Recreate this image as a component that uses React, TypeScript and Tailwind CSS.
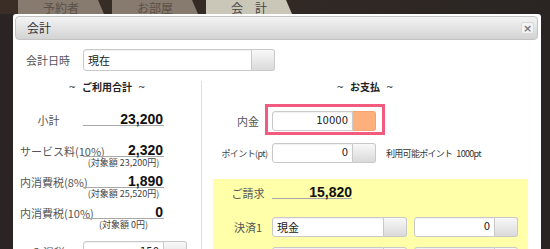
import React from "react";

const NUM = "font-['Liberation_Sans',Arial,sans-serif]";

function Field({
  w,
  text,
  align = "right",
  btn = "gray",
  h = "h-[20px]",
}: {
  w: string;
  text?: string;
  align?: "left" | "right";
  btn?: "gray" | "orange";
  h?: string;
}) {
  return (
    <div className={`flex ${h}`}>
      <div
        className={`${w} h-full bg-white border border-[#c9c9c9] rounded-l-[3px] flex items-center ${
          align === "right" ? "justify-end pr-[4px] font-['DejaVu_Sans',sans-serif] text-[10px]" : "justify-start pl-[4px] text-[11px]"
        } text-[#222] leading-none shadow-[inset_0_1px_1px_rgba(0,0,0,0.06)]`}
      >
        {text}
      </div>
      {btn === "orange" ? (
        <div className="w-[23px] h-full bg-[#fdb07b] border border-[#f5a26c] border-l-0 rounded-r-[3px]" />
      ) : (
        <div className="w-[23px] h-full bg-gradient-to-b from-[#f8f8f8] to-[#dadada] border border-[#c9c9c9] border-l-0 rounded-r-[3px]" />
      )}
    </div>
  );
}

function SumRow({ label, value, sub }: { label: string; value: string; sub?: string }) {
  return (
    <div className="flex h-[31px]">
      <div className="ml-[7px] w-[57px] h-[20px] pt-[7px] text-center whitespace-nowrap text-[11px] leading-[14px] text-[#555]">
        {label}
      </div>
      <div className="ml-[6px] w-[81px] flex flex-col">
        <div
          className={`h-[20px] border-b border-[#a8a8a8] flex items-end justify-end pr-[1px] text-[14px] font-bold leading-[11px] text-[#111] ${NUM}`}
        >
          {value}
        </div>
        <div className="h-[11px] pt-[1px] text-center text-[9px] leading-[10px] text-[#444] whitespace-nowrap">
          {sub}
        </div>
      </div>
    </div>
  );
}

export default function App() {
  return (
    <div className="w-[550px] h-[249px] overflow-hidden bg-[#2a2523] font-['Noto_Sans_CJK_JP',sans-serif]">
      {/* tabs */}
      <div className="flex h-[14px] pl-[18px] gap-[8px] overflow-hidden bg-gradient-to-r from-[#3a2e27] to-[#2a2523]">
        <div className="w-[86px] h-[14px] bg-[#877b6f] [clip-path:polygon(0_0,calc(100%-6px)_0,100%_100%,0_100%)] text-center text-[12px] leading-[12px] pt-[2px] text-[#5a5047]">
          予約者
        </div>
        <div className="w-[86px] h-[14px] bg-[#877b6f] [clip-path:polygon(0_0,calc(100%-6px)_0,100%_100%,0_100%)] text-center text-[12px] leading-[12px] pt-[2px] text-[#5a5047]">
          お部屋
        </div>
        <div className="w-[86px] h-[14px] bg-[#cbc7b8] [clip-path:polygon(0_0,calc(100%-6px)_0,100%_100%,0_100%)] text-center text-[12px] leading-[12px] pt-[2px] text-[#444]">
          会　計
        </div>
      </div>

      {/* dialog */}
      <div className="ml-[13px] w-[528px] h-[260px] bg-white rounded-t-[3px]">
        <div className="pt-[2px] pl-[2px] pr-[3px]">
          <div className="h-[24px] rounded-[4px] border border-[#c3c3c3] bg-gradient-to-b from-[#f4f4f4] to-[#d3d3d3] flex items-center justify-between pl-[11px] pr-[3px]">
            <span className="text-[12px] leading-none text-[#333]">会計</span>
            <div className="w-[13px] h-[12px] bg-[#f3f3f3] border border-[#d8d8d8] rounded-[2px] flex items-center justify-center text-[11px] font-bold leading-none text-[#777] font-['DejaVu_Sans',sans-serif]">
              ×
            </div>
          </div>
        </div>

        {/* date row */}
        <div className="flex items-center mt-[9px]">
          <div className="w-[57px] text-right text-[11px] text-[#555] leading-none">会計日時</div>
          <div className="ml-[13px]">
            <Field w="w-[169px]" text="現在" align="left" h="h-[22px]" />
          </div>
        </div>

        {/* columns */}
        <div className="flex mt-[10px]">
          {/* left column */}
          <div className="w-[189px] h-[170px] border-r border-[#e1e1e1]">
            <div className="h-[12px] flex justify-center items-center gap-[6px] text-[10px] font-bold leading-[12px] text-[#222]">
              <span className="font-['DejaVu_Sans',sans-serif] font-normal text-[9px]">~</span>
              <span>ご利用合計</span>
              <span className="font-['DejaVu_Sans',sans-serif] font-normal text-[9px]">~</span>
            </div>
            <div className="mt-[13px]">
              <SumRow label="小計" value="23,200" />
              <SumRow label="サービス料(10%)" value="2,320" sub="(対象額 23,200円)" />
              <SumRow label="内消費税(8%)" value="1,890" sub="(対象額 25,520円)" />
              <SumRow label="内消費税(10%)" value="0" sub="(対象額 0円)" />
            </div>
            <div className="flex items-center mt-[11px]">
              <div className="ml-[7px] w-[57px] text-center text-[11px] leading-none text-[#555]">入湯税</div>
              <div className="ml-[6px]">
                <Field w="w-[81px]" text="150" h="h-[22px]" />
              </div>
            </div>
          </div>

          {/* right column */}
          <div className="flex-1 pr-[13px]">
            <div className="h-[12px] flex justify-center items-center gap-[6px] text-[10px] font-bold leading-[12px] text-[#222]">
              <span className="font-['DejaVu_Sans',sans-serif] font-normal text-[9px]">~</span>
              <span>お支払</span>
              <span className="font-['DejaVu_Sans',sans-serif] font-normal text-[9px]">~</span>
            </div>

            <div className="flex items-center mt-[11px] pl-[22px]">
              <div className="w-[48px] pt-[4px] text-center text-[11px] leading-none text-[#555]">内金</div>
              <div className="-ml-[7px] border-[3px] border-[#f25a7e] pt-[4px] pb-[1px] pl-[4px] pr-[6px]">
                <Field w="w-[81px]" text="10000" btn="orange" />
              </div>
            </div>

            <div className="flex items-center mt-[8px] pl-[18px]">
              <div className="w-[52px] pr-[3px] text-center text-[9px] leading-none text-[#444] whitespace-nowrap tracking-[-0.6px]">
                ポイント(pt)
              </div>
              <Field w="w-[81px]" text="0" />
              <div className="ml-[10px] text-[9px] leading-none text-[#333] whitespace-nowrap tracking-[-0.7px]">
                利用可能ポイント&nbsp;&nbsp;&nbsp;1000pt
              </div>
            </div>

            <div className="ml-[11px] mt-[16px] w-[315px] h-[80px] bg-[#ffffa9] pl-[11px] pt-[4px]">
              <div className="flex">
                <div className="w-[48px] pt-[4px] text-center text-[11px] leading-[12px] text-[#555]">ご請求</div>
                <div
                  className={`w-[80px] h-[16px] border-b border-[#a8a8a8] flex items-end justify-end text-[14px] font-bold leading-[11px] text-[#111] ${NUM}`}
                >
                  15,820
                </div>
              </div>
              <div className="flex items-center mt-[18px]">
                <div className="w-[48px] text-center text-[11px] leading-none text-[#555]">決済1</div>
                <Field w="w-[112px]" text="現金" align="left" />
                <div className="ml-[7px]">
                  <Field w="w-[81px]" text="0" />
                </div>
              </div>
              <div className="flex items-center mt-[10px]">
                <div className="w-[48px] text-center text-[11px] leading-none text-[#555]">決済2</div>
                <Field w="w-[112px]" text="" align="left" />
                <div className="ml-[7px]">
                  <Field w="w-[81px]" text="0" />
                </div>
              </div>
            </div>
          </div>
        </div>
      </div>
    </div>
  );
}
